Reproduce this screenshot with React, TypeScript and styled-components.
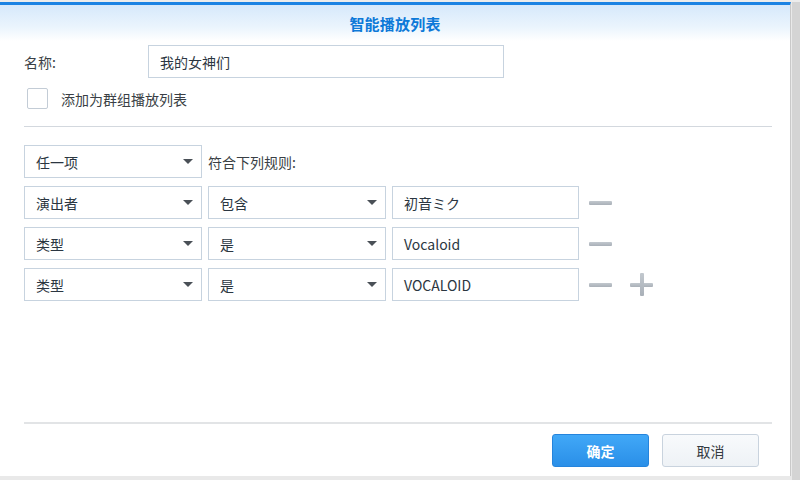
import React from "react";
import styled, { createGlobalStyle } from "styled-components";

const GlobalStyle = createGlobalStyle`
  html, body { margin: 0; padding: 0; }
  body {
    background: #bfbfbf;
    font-family: "Noto Sans CJK SC", "Noto Sans", sans-serif;
    width: 800px;
    height: 480px;
    overflow: hidden;
  }
`;

const Page = styled.div`
  width: 800px;
  height: 480px;
  display: flex;
  flex-direction: column;
  background: linear-gradient(to right, #e9e9e9 0, #e9e9e9 792px, #d4d4d4 792px);
`;

const TopStrip = styled.div`
  height: 2px;
  background: #ececec;
`;

const Dialog = styled.div`
  width: 791px;
  height: 474px;
  box-sizing: border-box;
  background: #fff;
  border-top: 3px solid #1b83e3;
  border-right: 1px solid #c9c9c9;
  display: flex;
  flex-direction: column;
`;

const Header = styled.div`
  height: 36px;
  display: flex;
  align-items: center;
  justify-content: center;
  background: linear-gradient(to bottom, #d6e9fb 0%, #eaf4fd 60%, #ffffff 100%);
  color: #0d79d8;
  font-size: 15px;
  font-weight: bold;
  letter-spacing: 0.2px;
`;

const Body = styled.div`
  flex: 1;
  display: flex;
  flex-direction: column;
  padding: 4px 19px 0 24px;
`;

const NameRow = styled.div`
  display: flex;
  align-items: center;
  height: 33px;
`;

const Label = styled.div`
  width: 124px;
  font-size: 14px;
  color: #3a3f45;
`;

const TextBox = styled.div<{ $w: number }>`
  width: ${(p) => p.$w}px;
  height: 33px;
  box-sizing: border-box;
  border: 1px solid #c7d3df;
  padding-left: 11px;
  display: flex;
  align-items: center;
  font-size: 14px;
  color: #2b3641;
  background: #fff;
`;

const CheckRow = styled.label`
  display: flex;
  align-items: center;
  gap: 13px;
  margin-top: 10px;
  margin-left: 3px;
  font-size: 14px;
  color: #3a3f45;
`;

const CheckBox = styled.span`
  width: 21px;
  height: 21px;
  box-sizing: border-box;
  border: 1px solid #c3ccd6;
  border-radius: 2px;
  background: #fff;
`;

const Divider = styled.div<{ $top: number }>`
  height: 1px;
  background: #d3d8de;
  margin-top: ${(p) => p.$top}px;
  width: 748px;
`;

const Rules = styled.div`
  margin-top: 18px;
  display: flex;
  flex-direction: column;
  gap: 8px;
`;

const RuleRow = styled.div`
  display: flex;
  align-items: center;
  gap: 6px;
`;

const SelectBox = styled.div`
  width: 178px;
  height: 33px;
  box-sizing: border-box;
  border: 1px solid #c7d3df;
  padding: 0 8px 0 11px;
  display: flex;
  align-items: center;
  justify-content: space-between;
  font-size: 14px;
  color: #2b3641;
  background: #fff;
`;

const Arrow = styled.span`
  width: 0;
  height: 0;
  border-left: 5px solid transparent;
  border-right: 5px solid transparent;
  border-top: 5px solid #4a5057;
`;

const RuleText = styled.div`
  font-size: 14px;
  color: #3a3f45;
`;

const Actions = styled.div`
  display: flex;
  align-items: center;
  gap: 18px;
  margin-left: 4px;
`;

const IconBtn = styled.span`
  width: 23px;
  height: 23px;
  position: relative;
  display: inline-block;
`;

const Bar = styled.span<{ $vertical?: boolean }>`
  position: absolute;
  background: linear-gradient(to bottom, #c2c8ce, #a9b0b8);
  border-radius: 1px;
  ${(p) =>
    p.$vertical
      ? "left: 9.5px; top: 0; width: 4px; height: 23px;"
      : "left: 0; top: 9.5px; width: 23px; height: 4px;"}
`;

const Footer = styled.div`
  padding: 0 31px 9px 24px;
  display: flex;
  flex-direction: column;
`;

const FooterLine = styled.div`
  height: 2px;
  background: #e2e4e6;
  width: 748px;
`;

const Buttons = styled.div`
  display: flex;
  justify-content: flex-end;
  gap: 13px;
  margin-top: 10px;
`;

const Button = styled.button<{ $primary?: boolean }>`
  width: 97px;
  height: 33px;
  box-sizing: border-box;
  border-radius: 3px;
  font-family: inherit;
  font-size: 14px;
  border: 1px solid ${(p) => (p.$primary ? "#2584dc" : "#c9d3de")};
  background: ${(p) =>
    p.$primary
      ? "linear-gradient(to bottom, #41a8f7, #2a8fe8)"
      : "linear-gradient(to bottom, #f8fafc, #eef2f6)"};
  color: ${(p) => (p.$primary ? "#fff" : "#333a41")};
  font-weight: ${(p) => (p.$primary ? "bold" : "normal")};
  padding: 0;
`;

const Minus = () => (
  <IconBtn>
    <Bar />
  </IconBtn>
);

const Plus = () => (
  <IconBtn>
    <Bar />
    <Bar $vertical />
  </IconBtn>
);

const rules = [
  { field: "演出者", op: "包含", value: "初音ミク" },
  { field: "类型", op: "是", value: "Vocaloid" },
  { field: "类型", op: "是", value: "VOCALOID" },
];

export default function App() {
  return (
    <>
      <GlobalStyle />
      <Page>
        <TopStrip />
        <Dialog>
          <Header>智能播放列表</Header>
          <Body>
            <NameRow>
              <Label>名称:</Label>
              <TextBox $w={356}>我的女神们</TextBox>
            </NameRow>
            <CheckRow>
              <CheckBox />
              添加为群组播放列表
            </CheckRow>
            <Divider $top={17} />
            <Rules>
              <RuleRow>
                <SelectBox>
                  任一项
                  <Arrow />
                </SelectBox>
                <RuleText>符合下列规则:</RuleText>
              </RuleRow>
              {rules.map((r, i) => (
                <RuleRow key={i}>
                  <SelectBox>
                    {r.field}
                    <Arrow />
                  </SelectBox>
                  <SelectBox>
                    {r.op}
                    <Arrow />
                  </SelectBox>
                  <TextBox $w={187}>{r.value}</TextBox>
                  <Actions>
                    <Minus />
                    {i === rules.length - 1 && <Plus />}
                  </Actions>
                </RuleRow>
              ))}
            </Rules>
          </Body>
          <Footer>
            <FooterLine />
            <Buttons>
              <Button $primary>确定</Button>
              <Button>取消</Button>
            </Buttons>
          </Footer>
        </Dialog>
      </Page>
    </>
  );
}
